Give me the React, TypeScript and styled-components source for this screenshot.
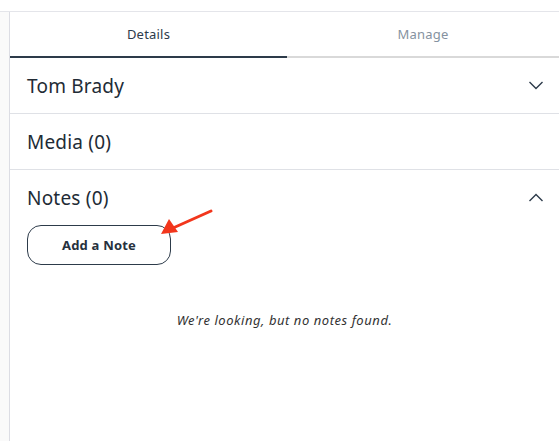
import styled, { createGlobalStyle } from 'styled-components'

const Global = createGlobalStyle`
  html, body { margin: 0; padding: 0; background: #fff; }
  body { font-family: "Noto Sans", "Open Sans", sans-serif; color: #2a3542; overflow: hidden; }
`

const Page = styled.div`
  position: relative;
  height: 441px;
  padding-top: 11px;
  box-sizing: border-box;
`

const Frame = styled.div`
  display: flex;
  height: 100%;
  border-top: 1px solid #e4e5ea;
`

const Rail = styled.div`
  width: 9px;
  background: #fafafa;
  border-right: 1px solid #dcdde4;
`

const Panel = styled.div`
  flex: 1;
  display: flex;
  flex-direction: column;
`

const Tabs = styled.div`
  display: grid;
  grid-template-columns: 277px 1fr;
`

const Tab = styled.div<{ $active?: boolean }>`
  height: 44px;
  display: flex;
  align-items: center;
  justify-content: center;
  font-size: 13px;
  letter-spacing: 0.2px;
  color: ${p => (p.$active ? '#2d3b4a' : '#8592a0')};
  border-bottom: 2px solid ${p => (p.$active ? '#2d3b4a' : '#d9d9d9')};
`

const Row = styled.div`
  height: 55px;
  display: flex;
  align-items: center;
  justify-content: space-between;
  padding: 0 15px 0 17px;
  border-bottom: 1px solid #dfe1e6;
`

const Title = styled.span`
  font-size: 19px;
  letter-spacing: 0.2px;
  color: #222b35;
`

const Section = styled.div`
  display: flex;
  flex-direction: column;
`

const Header = styled(Row)`
  border-bottom: none;
`

const Body = styled.div`
  padding: 0 17px;
`

const Button = styled.button`
  width: 144px;
  height: 40px;
  border: 1px solid #2d3b4a;
  border-radius: 14px;
  background: #fff;
  font-family: "Noto Sans", sans-serif;
  font-weight: 700;
  font-size: 13px;
  color: #26313d;
  letter-spacing: 0.2px;
`

const Empty = styled.p`
  margin: 46px 0 0;
  text-align: center;
  font-style: italic;
  font-size: 13px;
  letter-spacing: 0.55px;
  color: #333;
`

const Arrow = styled.svg`
  position: absolute;
  left: 155px;
  top: 205px;
`

function Chevron({ up }: { up?: boolean }) {
  return (
    <svg width="16" height="9" viewBox="0 0 16 9" fill="none">
      <path
        d={up ? 'M1.5 8 L8 1.5 L14.5 8' : 'M1.5 1 L8 7.5 L14.5 1'}
        stroke="#2d3b4a"
        strokeWidth="1.4"
      />
    </svg>
  )
}

export default function App() {
  return (
    <>
      <Global />
      <Page>
        <Frame>
          <Rail />
          <Panel>
            <Tabs>
              <Tab $active>Details</Tab>
              <Tab>Manage</Tab>
            </Tabs>
            <Row>
              <Title>Tom Brady</Title>
              <Chevron />
            </Row>
            <Row>
              <Title>Media (0)</Title>
            </Row>
            <Section>
              <Header>
                <Title>Notes (0)</Title>
                <Chevron up />
              </Header>
              <Body>
                <Button>Add a Note</Button>
                <Empty>We're looking, but no notes found.</Empty>
              </Body>
            </Section>
          </Panel>
        </Frame>
        <Arrow width="60" height="35" viewBox="0 0 60 35">
          <line x1="56" y1="6" x2="18" y2="23" stroke="#f2361c" strokeWidth="3" strokeLinecap="round" />
          <polygon points="6,29 14,14 23,27" fill="#f2361c" />
        </Arrow>
      </Page>
    </>
  )
}
